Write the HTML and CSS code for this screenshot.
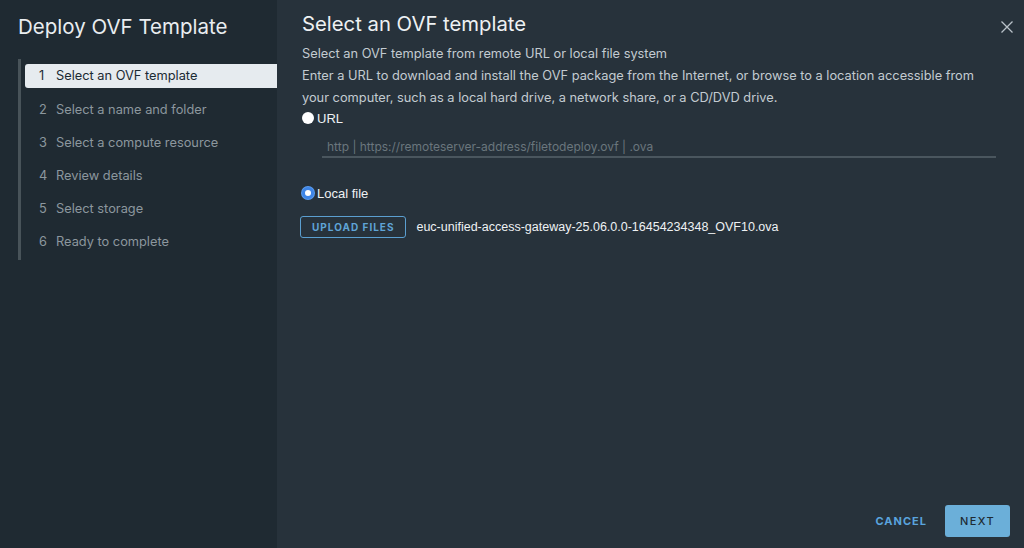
FILE: index.html
```html
<!DOCTYPE html>
<html>
<head>
<meta charset="utf-8">
<link rel="stylesheet" href="styles.css">
</head>
<body>
<div class="modal">
  <aside class="sidebar">
    <h1 class="side-title">Deploy OVF Template</h1>
    <ol class="steps">
      <li class="step active"><span class="num">1</span>Select an OVF template</li>
      <li class="step"><span class="num">2</span>Select a name and folder</li>
      <li class="step"><span class="num">3</span>Select a compute resource</li>
      <li class="step"><span class="num">4</span>Review details</li>
      <li class="step"><span class="num">5</span>Select storage</li>
      <li class="step"><span class="num">6</span>Ready to complete</li>
    </ol>
  </aside>
  <main class="content">
    <header class="head">
      <h2 class="title">Select an OVF template</h2>
      <svg class="close" width="14" height="14" viewBox="0 0 14 14"><path d="M1.5 1.5 L12.5 12.5 M12.5 1.5 L1.5 12.5" stroke="#b9c2c8" stroke-width="1.3" fill="none"/></svg>
    </header>
    <div class="body">
      <p class="txt">Select an OVF template from remote URL or local file system</p>
      <p class="txt">Enter a URL to download and install the OVF package from the Internet, or browse to a location accessible from your computer, such as a local hard drive, a network share, or a CD/DVD drive.</p>
      <label class="radio"><span class="dot"></span>URL</label>
      <div class="url"><span class="ph">http | https://remoteserver-address/filetodeploy.ovf | .ova</span></div>
      <label class="radio local"><span class="dot on"></span>Local file</label>
      <div class="upload-row">
        <span class="btn-up">UPLOAD FILES</span>
        <span class="fname">euc-unified-access-gateway-25.06.0.0-16454234348_OVF10.ova</span>
      </div>
    </div>
    <footer class="foot">
      <span class="cancel">CANCEL</span>
      <span class="next">NEXT</span>
    </footer>
  </main>
</div>
</body>
</html>
```
FILE: styles.css
```css
* { box-sizing: border-box; }
html, body { margin: 0; padding: 0; }
body {
  width: 1024px; height: 548px; overflow: hidden;
  font-family: "Inter", "Noto Sans", sans-serif;
  background: #27323b;
}
.modal { display: flex; height: 548px; }
.sidebar {
  width: 277px; flex: none;
  background: #1f2a32;
  padding: 13px 0 0 18px;
}
.side-title {
  margin: 0; font-weight: 400; font-size: 20.5px; color: #e9edf0;
  line-height: 28px;
}
.steps {
  list-style: none; margin: 18px 0 0; padding: 5px 0 5px 4px;
  border-left: 3px solid #485359;
}
.step {
  height: 24px; line-height: 24px; margin-bottom: 9px;
  font-size: 12.8px; color: #8c979e; padding-left: 14px;
  border-radius: 3px 0 0 3px;
}
.step:last-child { margin-bottom: 2px; }
.step:nth-child(n+2) { line-height: 25px; }
.step .num { display: inline-block; width: 17px; }
.step.active { background: #e6ebef; color: #1b2a33; }
.content { flex: 1; display: flex; flex-direction: column; padding: 0 0 0 25px; }
.head { display: flex; justify-content: space-between; align-items: center; padding: 12px 10px 0 0; }
.title { margin: 0; font-weight: 400; font-size: 20.3px; color: #eef1f3; line-height: 24px; }
.close { margin-top: 6px; }
.body { padding-right: 28px; flex: 1; }
.txt { margin: 0; font-size: 12.8px; line-height: 22px; color: #c3cbd1; }
.head + .body { margin-top: 7px; }
.radio {
  display: flex; align-items: center; font-family: "Liberation Sans", Arial, sans-serif;
  font-size: 13px; color: #eef1f3; height: 20px; margin-top: -1px;
}
.dot {
  width: 12px; height: 12px; border-radius: 50%; background: #fff; margin-right: 3px;
}
.dot.on { background: #fff; border: 3px solid #3e85e6; box-shadow: 0 0 0 1px #5a9cf0; }
.url {
  margin: 4px 0 0 20px; border-bottom: 2px solid #4a565e; height: 26px; padding: 3px 0 0 5px;
}
.ph { font-size: 12px; color: #6a767d; }
.local { margin-top: 25px; }
.upload-row { display: flex; align-items: center; margin-top: 13px; margin-left: -2px; }
.btn-up {
  border: 1px solid #5b9fd0; border-radius: 3px; height: 22px; line-height: 20px;
  padding: 0 11px; font-size: 10px; font-weight: 700; letter-spacing: 1px; color: #5fa4d6;
}
.fname { margin-left: 10px; font-family: "Liberation Sans", Arial, sans-serif; font-size: 12.5px; color: #eef1f3; }
.foot { display: flex; justify-content: flex-end; align-items: center; padding: 0 14px 11px 0; }
.cancel { font-size: 11px; font-weight: 700; letter-spacing: 1px; color: #5aa4de; margin-right: 18px; }
.next {
  background: #6bafd9; color: #1e2b33; border-radius: 3px; width: 65px; height: 32px;
  line-height: 32px; text-align: center; font-size: 11px; letter-spacing: 1.4px; font-weight: 500;
}
```
